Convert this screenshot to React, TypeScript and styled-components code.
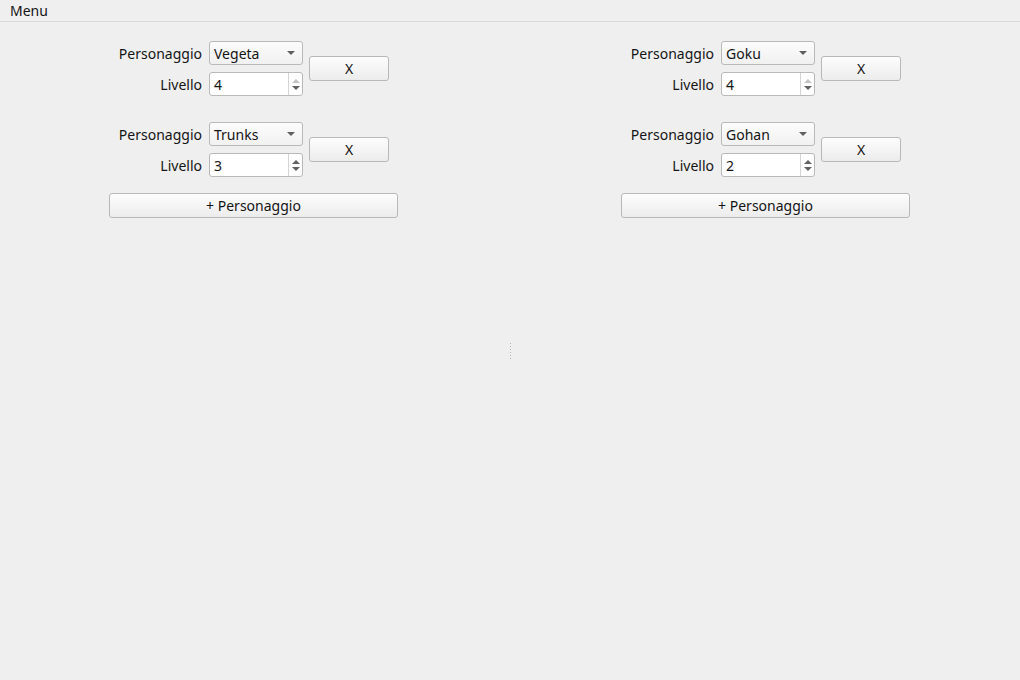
import React from 'react';
import styled, { createGlobalStyle } from 'styled-components';

const GlobalStyle = createGlobalStyle`
	html, body {
		margin: 0;
		padding: 0;
		background: #efefef;
		font-family: 'Noto Sans', 'DejaVu Sans', sans-serif;
		font-size: 14px;
		color: #141414;
	}
	#root {
		height: 680px;
	}
`;

const Window = styled.div`
	display: flex;
	flex-direction: column;
	width: 1020px;
	height: 680px;
	overflow: hidden;
`;

const MenuBar = styled.div`
	display: flex;
	align-items: center;
	height: 21px;
	padding-left: 10px;
	border-bottom: 1px solid #dadada;
`;

const MenuItem = styled.span`
	line-height: 21px;
`;

const Body = styled.div`
	display: flex;
	flex: 1;
`;

const Pane = styled.div`
	flex: 1;
	display: flex;
	justify-content: center;
	padding-top: 19px;
	padding-right: 1px;
`;

const Handle = styled.div`
	width: 4px;
	display: flex;
	align-items: center;
	justify-content: center;
`;

const Grip = styled.div`
	width: 1px;
	height: 17px;
	background: repeating-linear-gradient(
		to bottom,
		#b4b4b4 0 1px,
		transparent 1px 3px
	);
`;

const Column = styled.div`
	display: flex;
	flex-direction: column;
	width: 289px;
`;

const Group = styled.div`
	display: flex;
	align-items: center;
	margin-bottom: 26px;

	&:last-of-type {
		margin-bottom: 16px;
	}
`;

const Fields = styled.div`
	display: grid;
	grid-template-columns: 93px 94px;
	column-gap: 7px;
	row-gap: 7px;
	align-items: center;
`;

const Label = styled.label`
	text-align: right;
	white-space: nowrap;
`;

const Box = styled.div`
	position: relative;
	box-sizing: border-box;
	height: 24px;
	border: 1px solid #b9b9b9;
	border-radius: 3px;
	display: flex;
	align-items: center;
`;

const Combo = styled(Box)`
	background: linear-gradient(#fcfcfc, #f1f1f1);
	padding-left: 4px;
	justify-content: space-between;
	padding-right: 7px;
`;

const Spin = styled(Box)`
	background: #ffffff;
	padding-left: 4px;
`;

const SpinButtons = styled.div`
	margin-left: auto;
	width: 13px;
	height: 100%;
	border-left: 1px solid #d4d4d4;
	display: flex;
	flex-direction: column;
	align-items: center;
	justify-content: center;
	gap: 3px;
`;

const Arrow = styled.span<{ dir: 'up' | 'down'; off?: boolean }>`
	width: 0;
	height: 0;
	border-left: 4px solid transparent;
	border-right: 4px solid transparent;
	${({ dir, off }) =>
		dir === 'up'
			? `border-bottom: 4px solid ${off ? '#c4c4c4' : '#606060'};`
			: `border-top: 4px solid ${off ? '#c4c4c4' : '#606060'};`}
`;

const Button = styled.button<{ wide?: boolean }>`
	box-sizing: border-box;
	font: inherit;
	color: inherit;
	height: 25px;
	width: ${({ wide }) => (wide ? '289px' : '80px')};
	margin-left: ${({ wide }) => (wide ? '0' : '6px')};
	border: 1px solid #b8b8b8;
	border-radius: 3px;
	background: linear-gradient(#fdfdfd, #ececec);
	padding: 0;
`;

interface Entry {
	name: string;
	level: number;
	max?: boolean;
}

const CharacterRow: React.FC<Entry> = ({ name, level, max }) => (
	<Group>
		<Fields>
			<Label>Personaggio</Label>
			<Combo>
				<span>{name}</span>
				<Arrow dir="down" />
			</Combo>
			<Label>Livello</Label>
			<Spin>
				<span>{level}</span>
				<SpinButtons>
					<Arrow dir="up" off={max} />
					<Arrow dir="down" />
				</SpinButtons>
			</Spin>
		</Fields>
		<Button>X</Button>
	</Group>
);

const Team: React.FC<{ members: Entry[] }> = ({ members }) => (
	<Pane>
		<Column>
			{members.map((m) => (
				<CharacterRow key={m.name} {...m} />
			))}
			<Button wide>+ Personaggio</Button>
		</Column>
	</Pane>
);

const App: React.FC = () => (
	<>
		<GlobalStyle />
		<Window>
			<MenuBar>
				<MenuItem>Menu</MenuItem>
			</MenuBar>
			<Body>
				<Team
					members={[
						{ name: 'Vegeta', level: 4, max: true },
						{ name: 'Trunks', level: 3 },
					]}
				/>
				<Handle>
					<Grip />
				</Handle>
				<Team
					members={[
						{ name: 'Goku', level: 4, max: true },
						{ name: 'Gohan', level: 2 },
					]}
				/>
			</Body>
		</Window>
	</>
);

export default App;
